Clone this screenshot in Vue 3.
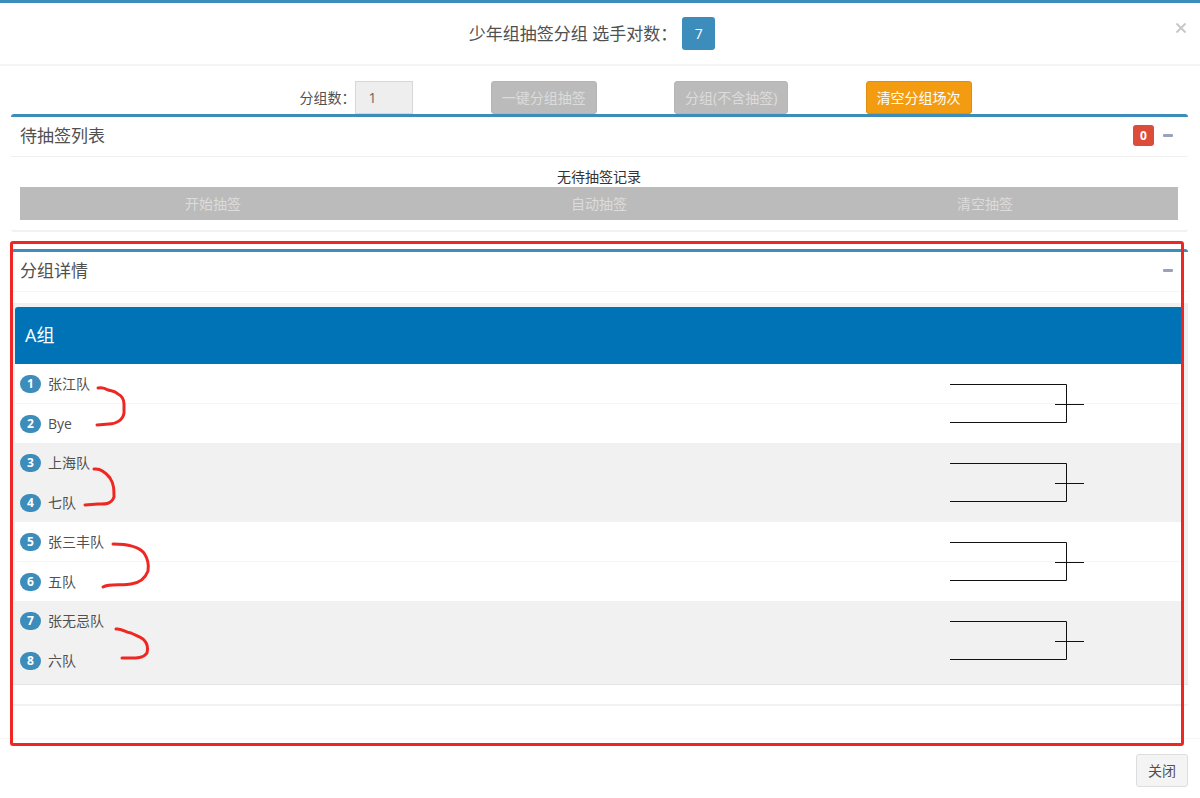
<script setup>
import { ref } from 'vue'

const groupCount = ref('1')
const drawActions = ['开始抽签', '自动抽签', '清空抽签']
const pairs = [
  [{ no: 1, name: '张江队' }, { no: 2, name: 'Bye' }],
  [{ no: 3, name: '上海队' }, { no: 4, name: '七队' }],
  [{ no: 5, name: '张三丰队' }, { no: 6, name: '五队' }],
  [{ no: 7, name: '张无忌队' }, { no: 8, name: '六队' }]
]
</script>

<template>
  <main class="dialog">
    <header class="dialog-head">
      <h1 class="dialog-title">少年组抽签分组 选手对数： <span class="count">7</span></h1>
      <button class="dismiss" type="button" aria-label="关闭窗口">
        <svg width="10" height="10" viewBox="0 0 10 10"><path d="M.5 .5 9.5 9.5M9.5 .5 .5 9.5" /></svg>
      </button>
    </header>

    <div class="content">
      <form class="toolbar" @submit.prevent>
        <div class="tool field">
          <label for="group-count">分组数：</label>
          <input id="group-count" v-model="groupCount" type="text" disabled />
        </div>
        <div class="tool"><button class="btn muted" type="button" disabled>一键分组抽签</button></div>
        <div class="tool"><button class="btn muted" type="button" disabled>分组(不含抽签)</button></div>
        <div class="tool"><button class="btn warning" type="button">清空分组场次</button></div>
      </form>

      <section class="panel">
        <header class="panel-head waiting-head">
          <h2>待抽签列表</h2>
          <span class="label-red">0</span>
          <button class="collapse" type="button" aria-label="折叠"><span></span></button>
        </header>
        <div class="waiting-body">
          <p>无待抽签记录</p>
          <div class="draw-bar">
            <button v-for="a in drawActions" :key="a" type="button" disabled>{{ a }}</button>
          </div>
        </div>
      </section>

      <div class="marked">
        <section class="panel">
          <header class="panel-head">
            <h2>分组详情</h2>
            <button class="collapse" type="button" aria-label="折叠"><span></span></button>
          </header>
          <div class="detail-body">
            <article class="group">
              <h3>A组</h3>
              <div v-for="(pair, i) in pairs" :key="i" class="pair" :class="{ shaded: i % 2 }">
                <ul>
                  <li v-for="team in pair" :key="team.no">
                    <span class="badge">{{ team.no }}</span>{{ team.name }}
                  </li>
                </ul>
                <svg class="bracket" width="135" height="40" viewBox="0 0 135 40">
                  <path d="M0 .5H116.5V38.5H0M105 20.5H134" />
                </svg>
              </div>
            </article>
          </div>
        </section>
        <div class="frame"></div>
        <svg class="strokes" width="160" height="300" viewBox="0 0 160 300">
          <path d="M87 25 C91 24 94 25 97 27 C101 28 104 28 107 31 C111 33 113 37 113 41 V50 C112 57 105 61 98 61 L86 62" />
          <path d="M83 106 C91 105 96 111 99 115 C103 121 103 127 103 134 C100 142 93 141 87 141 L74 142" />
          <path d="M102 181 C114 181 127 183 133 190 C137 196 138 202 137 208 C134 216 128 220 120 221 C112 223 99 220 92 224" />
          <path d="M105 266 C110 265 114 269 120 270 C126 273 130 274 133 277 C137 281 137 286 136 290 C132 296 124 295 111 295" />
        </svg>
      </div>
    </div>

    <footer class="dialog-foot">
      <button class="btn plain" type="button">关闭</button>
    </footer>
  </main>
</template>

<style>
body {
  margin: 0;
  background: #fff;
}
</style>

<style scoped>
.dialog {
  border-top: 3px solid #3c8dbc;
  color: #505050;
  font: 14px/20px "Open Sans", "Noto Sans CJK SC", sans-serif;
}
.dialog *,
.dialog {
  box-sizing: border-box;
}
button,
input {
  font: inherit;
}
h1, h2, h3, p, ul {
  margin: 0;
  padding: 0;
  font-weight: 400;
}
.dialog-head {
  position: relative;
  display: flex;
  justify-content: center;
  align-items: center;
  height: 63px;
  border-bottom: 2px solid #f4f4f4;
}
.dialog-title {
  display: flex;
  align-items: center;
  font-size: 17px;
  line-height: 24px;
  margin-right: 16px;
}
.count {
  width: 33px;
  margin-left: 5px;
  border-radius: 3px;
  background: #3c8dbc;
  color: #fff;
  font-size: 14px;
  line-height: 33px;
  text-align: center;
}
.dismiss {
  position: absolute;
  top: 16px;
  right: 10px;
  display: flex;
  padding: 4px;
  border: 0;
  background: none;
}
.dismiss path {
  fill: none;
  stroke: #c8c8c8;
  stroke-width: 2;
}
.content {
  padding: 15px 12px 0 11px;
}
.toolbar {
  display: grid;
  grid-template-columns: 43fr repeat(4, 32fr) 30fr;
}
.tool {
  display: flex;
  justify-content: center;
  align-items: center;
}
.tool:first-child {
  grid-column: 2;
}
.field label {
  white-space: nowrap;
}
.field input {
  width: 58px;
  height: 33px;
  padding: 0 12px;
  border: 1px solid #d8d8d8;
  border-radius: 0;
  background: #eee;
  color: #666;
}
.btn {
  height: 33px;
  padding: 0 10px;
  border: 1px solid transparent;
  border-radius: 3px;
  white-space: nowrap;
}
.muted {
  background: #bbb;
  border-color: #b5b5b5;
  color: #dcdcdc;
}
.warning {
  background: #f39c12;
  border-color: #e08e0b;
  color: #fff;
}
.plain {
  padding: 0 11px;
  background: #f4f4f4;
  border-color: #ddd;
  color: #505050;
}
.panel {
  border-top: 3px solid #3c8dbc;
  border-bottom: 2px solid #f1f1f1;
  border-radius: 3px;
}
.panel-head {
  display: flex;
  align-items: center;
  height: 40px;
  padding: 0 15px 2px 9px;
  border-bottom: 1px solid #f6f6f6;
}
.waiting-head {
  border-color: #f0f0f0;
}
h2 {
  flex: 1;
  font-size: 17px;
  line-height: 24px;
}
.label-red {
  width: 21px;
  margin-right: 9px;
  border-radius: 3px;
  background: #dd4b39;
  color: #fff;
  font-size: 12px;
  font-weight: 700;
  line-height: 21px;
  text-align: center;
}
.collapse {
  padding: 6px 0;
  border: 0;
  background: none;
}
.collapse span {
  display: block;
  width: 10px;
  height: 3px;
  border-radius: 1px;
  background: #98a2bd;
}
.waiting-body {
  padding: 10px 10px 10px 9px;
}
.waiting-body p {
  text-align: center;
  color: #333;
}
.draw-bar {
  display: grid;
  grid-template-columns: repeat(3, 1fr);
  background: #bbb;
}
.draw-bar button {
  height: 33px;
  padding: 0;
  border: 0;
  background: none;
  color: #dcdcdc;
}
.marked {
  position: relative;
  margin-top: 17px;
}
.detail-body {
  padding: 11px 0 19px;
}
.group {
  padding: 4px;
  background: #f1f1f1;
  border-bottom: 1px solid #e4e4e4;
}
h3 {
  padding: 0 10px;
  border-radius: 3px 3px 0 0;
  background: #0073b7;
  color: #fff;
  font-size: 18px;
  line-height: 57px;
}
.pair {
  position: relative;
  min-height: 79px;
  background: #fff;
}
.pair.shaded {
  background: #f1f1f1;
}
.pair ul {
  display: grid;
  grid-template-rows: 40px 39px;
  list-style: none;
}
.pair li {
  display: flex;
  align-items: center;
  padding-left: 5px;
}
.pair li:first-child {
  border-bottom: 1px solid #f6f6f6;
}
.pair.shaded li:first-child {
  border-color: #f1f1f1;
}
.badge {
  width: 21px;
  margin-right: 7px;
  border-radius: 9px;
  background: #3c8dbc;
  color: #fff;
  font-size: 12px;
  font-weight: 700;
  line-height: 18px;
  text-align: center;
}
.bracket {
  position: absolute;
  top: 20px;
  right: 99px;
}
.bracket path {
  fill: none;
  stroke: #111;
  stroke-width: 1;
}
.frame {
  position: absolute;
  top: -8px;
  right: 4px;
  bottom: -40px;
  left: -1px;
  border: 3px solid #ee2722;
  border-radius: 3px;
  pointer-events: none;
}
.strokes {
  position: absolute;
  top: 114px;
  left: 0;
  pointer-events: none;
}
.strokes path {
  fill: none;
  stroke: #ee2722;
  stroke-width: 3;
  stroke-linecap: round;
  stroke-linejoin: round;
}
.dialog-foot {
  display: flex;
  justify-content: flex-end;
  margin-top: 32px;
  padding: 15px 12px 11px;
  border-top: 1px solid #f7f7f7;
}
</style>
